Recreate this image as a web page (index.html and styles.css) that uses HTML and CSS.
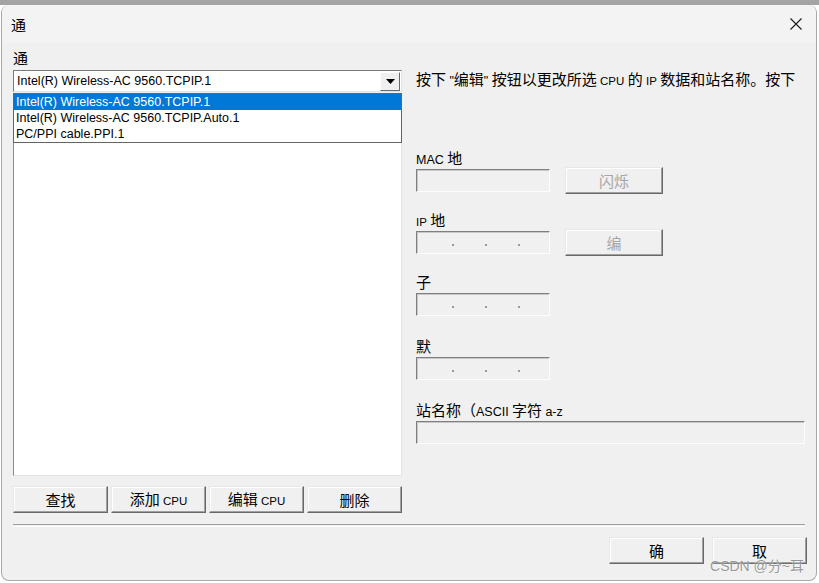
FILE: index.html
```html
<!DOCTYPE html>
<html lang="zh">
<head>
<meta charset="utf-8">
<title>通</title>
<link rel="stylesheet" href="styles.css">
</head>
<body>
<div class="window">
  <div class="titlebar">
    <span class="title">通</span>
    <svg class="close" width="12" height="12" viewBox="0 0 12 12"><path d="M0.5 0.5 L11.5 11.5 M11.5 0.5 L0.5 11.5" stroke="#1a1a1a" stroke-width="1.1" fill="none"/></svg>
  </div>
  <div class="content">
    <div class="main">
      <div class="left">
        <div class="label">通</div>
        <div class="combo-wrap">
          <div class="combo">
            <span class="en combo-text">Intel(R) Wireless-AC 9560.TCPIP.1</span>
            <span class="arrow-btn"><svg width="9" height="5" viewBox="0 0 9 5"><path d="M0 0 H9 L4.5 5 Z" fill="#000"/></svg></span>
          </div>
          <div class="dropdown">
            <div class="opt selected en">Intel(R) Wireless-AC 9560.TCPIP.1</div>
            <div class="opt en">Intel(R) Wireless-AC 9560.TCPIP.Auto.1</div>
            <div class="opt en">PC/PPI cable.PPI.1</div>
          </div>
        </div>
        <div class="listbox"></div>
        <div class="btnrow">
          <button class="btn">查找</button>
          <button class="btn">添加 <span class="en small">CPU</span></button>
          <button class="btn">编辑 <span class="en small">CPU</span></button>
          <button class="btn">删除</button>
        </div>
      </div>
      <div class="right">
        <p class="desc">按下 <span class="en">"</span>编辑<span class="en">"</span> 按钮以更改所选 <span class="en small">CPU</span> 的 <span class="en small">IP</span> 数据和站名称。按下</p>
        <div class="grp">
          <div class="label"><span class="en">MAC</span> 地</div>
          <div class="row">
            <div class="field"></div>
            <button class="btn btn-side" disabled>闪烁</button>
          </div>
        </div>
        <div class="grp">
          <div class="label"><span class="en small">IP</span> 地</div>
          <div class="row">
            <div class="field ip"><i></i><i></i><i></i></div>
            <button class="btn btn-side" disabled>编</button>
          </div>
        </div>
        <div class="grp">
          <div class="label">子</div>
          <div class="row">
            <div class="field ip"><i></i><i></i><i></i></div>
          </div>
        </div>
        <div class="grp late">
          <div class="label">默</div>
          <div class="row">
            <div class="field ip"><i></i><i></i><i></i></div>
          </div>
        </div>
        <div class="grp late">
          <div class="label">站名称（<span class="en">ASCII</span> 字符 <span class="en">a-z</span></div>
          <div class="row">
            <div class="field wide"></div>
          </div>
        </div>
      </div>
    </div>
    <div class="sep"></div>
    <div class="footer">
      <button class="btn btn-foot">确</button>
      <button class="btn btn-foot">取</button>
    </div>
  </div>
  <div class="watermark">CSDN @分~耳</div>
</div>
</body>
</html>
```
FILE: styles.css
```css
html, body {
  margin: 0;
  padding: 0;
}
body {
  width: 819px;
  height: 583px;
  overflow: hidden;
  background: linear-gradient(#a4a4a4 0 5px, #ffffff 5px);
  font-family: "Noto Sans CJK SC", "Liberation Sans", sans-serif;
  font-size: 15px;
  color: #000;
}
.en {
  font-family: "Liberation Sans", "Noto Sans CJK SC", sans-serif;
  font-size: 12.5px;
}
.en.small {
  font-size: 11.5px;
}
.window {
  position: relative;
  margin: 5px 0 0 1px;
  width: 816px;
  height: 576px;
  box-sizing: border-box;
  background: #f0f0f0;
  border-radius: 8px;
  border: 1px solid #a8a8a8;
  border-top: none;
  overflow: hidden;
  display: flex;
  flex-direction: column;
}
.titlebar {
  height: 38px;
  flex: none;
  background: #f3f3f3;
  display: flex;
  align-items: center;
  justify-content: space-between;
  padding: 0 14px 0 9px;
}
.title {
  font-size: 15px;
  line-height: 18px;
  margin-top: 1px;
}
.close {
  display: block;
  margin-top: -1px;
}
.content {
  flex: 1;
  padding: 6px 11px 0 11px;
  display: flex;
  flex-direction: column;
}
.main {
  display: flex;
  gap: 14px;
}
.left {
  width: 389px;
  display: flex;
  flex-direction: column;
}
.label {
  line-height: 18px;
  height: 18px;
  white-space: nowrap;
}
.left > .label {
  margin-bottom: 3px;
}
.combo-wrap {
  position: relative;
}
.combo {
  height: 22px;
  box-sizing: border-box;
  background: #fff;
  border: 1px solid;
  border-color: #7a7a7a #e3e3e3 #e3e3e3 #7a7a7a;
  display: flex;
  align-items: center;
  justify-content: space-between;
  padding: 0 1px 0 3px;
}
.combo-text {
  line-height: 16px;
}
.arrow-btn {
  width: 20px;
  height: 19px;
  box-sizing: border-box;
  background: #f0f0f0;
  border: 1px solid;
  border-color: #fff #696969 #696969 #fff;
  display: flex;
  align-items: center;
  justify-content: center;
}
.arrow-btn svg {
  display: block;
}
.dropdown {
  position: absolute;
  left: 0;
  top: 23px;
  width: 389px;
  box-sizing: border-box;
  background: #fff;
  border: 1px solid #646464;
  z-index: 2;
}
.opt {
  height: 16px;
  line-height: 16px;
  padding-left: 2px;
  white-space: nowrap;
}
.opt.selected {
  background: #0078d7;
  color: #fff;
}
.listbox {
  margin-top: 1px;
  height: 383px;
  box-sizing: border-box;
  background: #fff;
  border: 1px solid;
  border-color: #8a8a8a #e3e3e3 #e3e3e3 #8a8a8a;
}
.btnrow {
  margin-top: 10px;
  display: grid;
  grid-template-columns: repeat(4, 1fr);
  gap: 3px;
}
.btn {
  font-family: "Noto Sans CJK SC", "Liberation Sans", sans-serif;
  font-size: 15px;
  color: #000;
  height: 27px;
  padding: 0;
  box-sizing: border-box;
  background: #f0f0f0;
  border: 1px solid;
  border-color: #e8e8e8 #696969 #696969 #e8e8e8;
  box-shadow: inset -1px -1px 0 #a0a0a0, inset 1px 1px 0 #fff;
  line-height: 18px;
  white-space: nowrap;
}
.btn[disabled] {
  color: #a6a6a6;
}
.right {
  width: 389px;
  display: flex;
  flex-direction: column;
}
.desc {
  margin: 21px 0 59px;
  line-height: 18px;
  white-space: nowrap;
}
.grp + .grp {
  margin-top: 17px;
}
.grp.late {
  margin-top: 19px;
}
.row {
  height: 27px;
  display: flex;
  align-items: center;
  gap: 15px;
}
.field {
  width: 134px;
  height: 23px;
  box-sizing: border-box;
  background: #f0f0f0;
  border: 1px solid;
  border-color: #7f7f7f #fdfdfd #fdfdfd #7f7f7f;
  box-shadow: inset 1px 1px 0 #c8c8c8;
}
.field.wide {
  width: 390px;
}
.field.ip {
  display: flex;
  align-items: flex-end;
  gap: 31px;
  padding: 0 0 7px 35px;
}
.field.ip i {
  width: 2px;
  height: 2px;
  background: #a89888;
}
.btn-side {
  width: 98px;
}
.sep {
  margin-top: 11px;
  height: 1px;
  border-top: 1px solid #a0a0a0;
  border-bottom: 1px solid #ffffff;
}
.footer {
  margin-top: 10px;
  display: flex;
  justify-content: flex-end;
  gap: 8px;
  margin-right: -2px;
}
.btn-foot {
  width: 95px;
}
.watermark {
  position: absolute;
  right: 12px;
  bottom: 5px;
  font-family: "Liberation Sans", "Noto Sans CJK SC", sans-serif;
  font-size: 14px;
  line-height: 18px;
  color: rgba(120, 120, 120, 0.75);
  text-shadow: 0 0 2px #fff;
  white-space: nowrap;
}
```
